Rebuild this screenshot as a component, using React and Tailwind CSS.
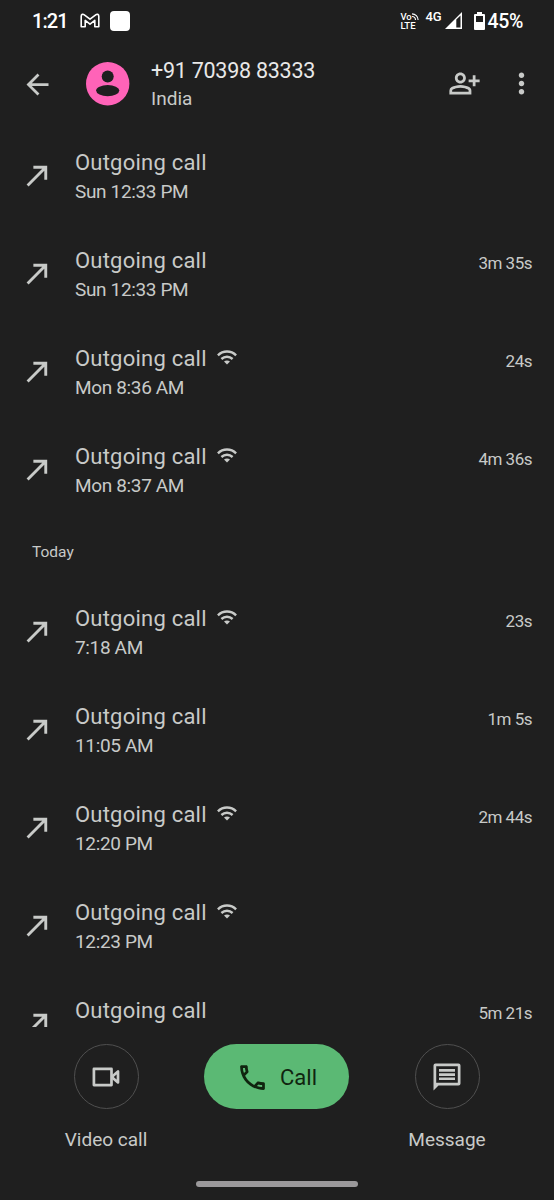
import React from 'react';
import { MdArrowBack, MdMoreVert, MdOutlineCall, MdOutlinePersonAddAlt } from 'react-icons/md';

const olderCalls = [
  { time: 'Sun 12:33 PM', duration: '', wifi: false },
  { time: 'Sun 12:33 PM', duration: '3m 35s', wifi: false },
  { time: 'Mon 8:36 AM', duration: '24s', wifi: true },
  { time: 'Mon 8:37 AM', duration: '4m 36s', wifi: true },
];

const todayCalls = [
  { time: '7:18 AM', duration: '23s', wifi: true },
  { time: '11:05 AM', duration: '1m 5s', wifi: false },
  { time: '12:20 PM', duration: '2m 44s', wifi: true },
  { time: '12:23 PM', duration: '', wifi: true },
  { time: '', duration: '5m 21s', wifi: false },
];

function OutgoingIcon() {
  return (
    <svg viewBox="0 0 24 24" className="mb-[3px] h-[33px] w-[33px]" fill="none" stroke="currentColor" strokeWidth="2.1">
      <path d="M9 6h9v9M17.8 6.2 4.8 19.2" />
    </svg>
  );
}

function WifiIcon() {
  return (
    <svg viewBox="0 0 20 15" className="ml-[10px] mb-1 h-[15px] w-5 shrink-0" fill="none" stroke="currentColor" strokeWidth="2.4">
      <path d="M0.9 5.3C6 .2 14 .2 19.1 5.3" />
      <path d="M4.4 9c3.2-3 8-3 11.2 0" />
      <path d="M10 14.6 7 11.6c1.8-1.4 4.2-1.4 6 0z" fill="currentColor" stroke="none" />
    </svg>
  );
}

function StatusBar() {
  return (
    <div className="flex h-10 items-center pl-8 pr-[31px] pt-px font-medium text-white">
      <span className="w-[48px] text-[20px] tracking-[-0.9px]">1:21</span>
      <svg viewBox="0 0 20 16" className="h-4 w-5" fill="none" stroke="currentColor" strokeWidth="1.6" strokeLinejoin="round">
        <path d="M1.2 3.2C1.2 1.2 3 .8 4.3 1.8L10 6.2l5.7-4.4c1.3-1 3.1-.6 3.1 1.4v10.6h-4V7.4L10 11.2 5.2 7.4v6.4h-4z" />
      </svg>
      <div className="ml-2.5 h-5 w-5 rounded bg-white" />
      <div className="ml-auto flex w-[20px] flex-col text-[9.5px] leading-[9px]">
        <span className="flex">
          Vo
          <svg viewBox="0 0 8 8" className="mt-px h-[7px] w-[7px]" fill="none" stroke="currentColor" strokeWidth="1.3">
            <path d="M0 1a7 7 0 0 1 7 7M0 4a4 4 0 0 1 4 4" />
          </svg>
        </span>
        <span>LTE</span>
      </div>
      <span className="mb-[7px] ml-[5px] w-[20px] text-[13px] leading-3">4G</span>
      <svg viewBox="0 0 17 17" className="h-[17px] w-[17px]">
        <path d="M0 17 17 0v17z" fill="currentColor" />
        <path d="M11.3 7.4 15.5 3.5v12h-4.2z" fill="#1f1f1f" />
      </svg>
      <svg viewBox="0 0 11 18" className="ml-[12px] h-[18px] w-[11px]">
        <path d="M3 0h5v2h2q1 0 1 1v14q0 1-1 1H1q-1 0-1-1V3q0-1 1-1h2z" fill="currentColor" />
        <path d="M2 4h7v6H2z" fill="#1f1f1f" />
      </svg>
      <span className="ml-[2px] pt-0.5 text-[19.5px] tracking-[-0.3px]">45%</span>
    </div>
  );
}

function Header() {
  return (
    <div className="flex h-[87px] items-center pl-[21px] pr-4 pt-px">
      <MdArrowBack className="h-[33px] w-[33px]" />
      <svg viewBox="0 0 44 44" className="ml-[32px] h-11 w-11">
        <circle cx="21.7" cy="21.7" r="21.7" fill="#ff63b8" />
        <circle cx="21.7" cy="14.4" r="6" fill="#1f1f1f" />
        <ellipse cx="21.7" cy="28.6" rx="11.6" ry="5.6" fill="#1f1f1f" />
      </svg>
      <div className="ml-[21px] flex-1 pt-px">
        <div className="text-[21.5px] leading-[28px] tracking-[-0.25px] text-[#e8e8e8]">+91 70398 83333</div>
        <div className="text-[19px] leading-[28px]">India</div>
      </div>
      <MdOutlinePersonAddAlt className="mb-0.5 h-[33px] w-[33px]" />
      <MdMoreVert className="mb-px ml-6 h-[33px] w-[33px]" />
    </div>
  );
}

function CallRow({ time, duration, wifi }) {
  return (
    <div className="flex h-[98px] shrink-0 items-center pl-[21px] pr-[22px]">
      <OutgoingIcon />
      <div className="ml-[21px] h-14 flex-1">
        <div className="flex h-7 items-center text-[22px] leading-[28px] tracking-[0.22px]">
          Outgoing call
          {wifi && <WifiIcon />}
          <span className="ml-auto pt-[3px] text-[17px] tracking-[-0.5px]">{duration}</span>
        </div>
        {time && <div className="pt-px text-[19px] leading-[28px] tracking-[-0.35px]">{time}</div>}
      </div>
    </div>
  );
}

function RoundAction({ label, children }) {
  return (
    <div className="flex w-[120px] flex-col items-center">
      <div className="flex h-[65px] w-[65px] items-center justify-center rounded-full border border-[#4f4f4f]">
        {children}
      </div>
      <span className="mt-[17px] text-[19px] leading-[28px]">{label}</span>
    </div>
  );
}

export default function App() {
  return (
    <div className="flex h-[1200px] w-[554px] flex-col overflow-hidden bg-[#1f1f1f] font-[Roboto,sans-serif] text-[#c8cac8]">
      <StatusBar />
      <Header />

      {/* Call history */}
      <div className="flex h-[900px] flex-col overflow-hidden pt-px">
        {olderCalls.map((call, i) => (
          <CallRow key={i} {...call} />
        ))}
        <div className="flex h-16 shrink-0 items-center pl-8 pt-0.5 text-[15.5px]">Today</div>
        {todayCalls.map((call, i) => (
          <CallRow key={i} {...call} />
        ))}
      </div>

      {/* Bottom actions */}
      <div className="flex justify-between pl-[46px] pr-[47px] pt-[17px]">
        <RoundAction label="Video call">
          <svg viewBox="0 0 28 20" className="h-5 w-7" fill="none" stroke="currentColor" strokeWidth="2.7" strokeLinejoin="round">
            <path d="M1.9 1.9h17.6v16.2H1.9z" />
            <path d="M26 4.5v11L20.8 11V9z" />
          </svg>
        </RoundAction>
        <button className="flex h-[65px] w-[145px] items-center justify-center gap-[11px] rounded-full bg-[#5bb974] pt-px text-[22px] text-[#10240f]">
          <MdOutlineCall className="h-[33px] w-[33px]" />
          Call
        </button>
        <RoundAction label="Message">
          <svg viewBox="0 0 28 28" className="h-7 w-7" fill="currentColor">
            <path fillRule="evenodd" d="M2.5.5h23q2 0 2 2v18q0 2-2 2h-20L.5 27.5v-25q0-2 2-2zM3.2 3.2v16.6h21.6V3.2z" />
            <path d="M6 6h16v2.7H6zM6 10.2h16v2.7H6zM6 14.4h16v2.7H6z" />
          </svg>
        </RoundAction>
      </div>

      <div className="mx-auto mt-auto mb-[13px] h-1.5 w-[162px] rounded-full bg-[#9b999b]" />
    </div>
  );
}
